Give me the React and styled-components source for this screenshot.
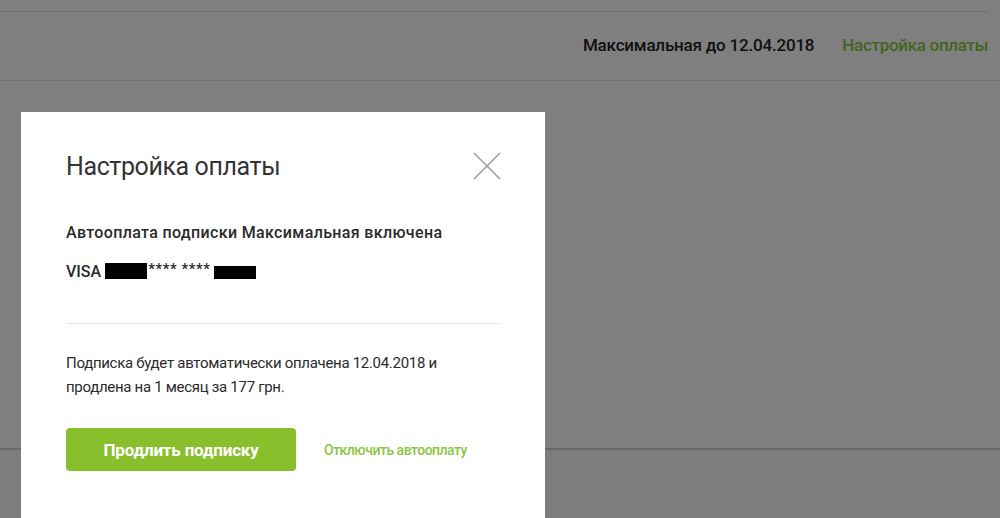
import React from "react";
import styled, { createGlobalStyle } from "styled-components";

const GlobalStyle = createGlobalStyle`
  html, body {
    margin: 0;
    padding: 0;
    background: #ffffff;
    font-family: Roboto, "Noto Sans", sans-serif;
    color: #222;
  }
  * { box-sizing: border-box; }
`;

const Page = styled.div`
  width: 1000px;
  height: 518px;
  overflow: hidden;
  display: flex;
  flex-direction: column;
`;

const TopBar = styled.div`
  height: 12px;
  width: 988px;
  border-bottom: 1px solid #dedede;
`;

const SubBar = styled.div`
  height: 69px;
  display: flex;
  align-items: center;
  justify-content: flex-end;
  gap: 28px;
  padding: 0 12px 2px 0;
  border-bottom: 1px solid #e4e4e4;
`;

const PlanText = styled.span`
  font-size: 17px;
  font-weight: 500;
  color: #1e1e1e;
  letter-spacing: -0.2px;
`;

const HeaderLink = styled.a`
  font-size: 17px;
  font-weight: 500;
  color: #8cc63f;
  letter-spacing: -0.3px;
  text-decoration: none;
`;

const Content = styled.div`
  height: 369px;
  border-bottom: 2px solid #cccccc;
`;

const Footer = styled.div`
  flex: 1;
  background: #fbfbfb;
`;

const Overlay = styled.div`
  position: fixed;
  inset: 0;
  background: rgba(0, 0, 0, 0.5);
  padding: 112px 0 0 21px;
`;

const Modal = styled.div`
  width: 524px;
  height: 460px;
  background: #ffffff;
  padding: 34px 45px 0 45px;
  display: flex;
  flex-direction: column;
`;

const ModalHead = styled.div`
  display: flex;
  align-items: center;
  justify-content: space-between;
  height: 40px;
`;

const Title = styled.h2`
  margin: 0;
  font-size: 25px;
  font-weight: 400;
  color: #333333;
  letter-spacing: -0.4px;
`;

const CloseButton = styled.button`
  border: 0;
  background: none;
  padding: 0;
  width: 30px;
  height: 30px;
  display: flex;
  align-items: center;
  justify-content: center;
  margin-right: -2px;
  cursor: pointer;
`;

const Subhead = styled.div`
  margin-top: 37px;
  font-size: 16px;
  font-weight: 500;
  color: #2a2a2a;
  letter-spacing: 0.35px;
`;

const CardRow = styled.div`
  margin-top: 19px;
  display: flex;
  align-items: center;
  font-size: 16px;
  font-weight: 500;
  color: #2a2a2a;
  height: 20px;
`;

const Masked = styled.span`
  display: inline-block;
  background: #000;
  width: ${(p) => p.$w}px;
  height: ${(p) => p.$h}px;
  margin: ${(p) => p.$m};
`;

const Stars = styled.span`
  font-size: 15px;
  letter-spacing: 0.6px;
  align-self: flex-start;
  margin-top: -1px;
`;

const Divider = styled.hr`
  margin: 42px 0 0;
  border: 0;
  border-top: 1px solid #e6e6e6;
`;

const Note = styled.p`
  margin: 27px 0 0;
  font-size: 15px;
  line-height: 24px;
  color: #2a2a2a;
  letter-spacing: -0.3px;
`;

const Actions = styled.div`
  margin-top: 29px;
  display: flex;
  align-items: center;
  gap: 28px;
`;

const PrimaryButton = styled.button`
  width: 230px;
  height: 43px;
  border: 0;
  border-radius: 4px;
  background: #89bf2c;
  color: #ffffff;
  font-family: inherit;
  font-size: 17px;
  font-weight: 700;
  letter-spacing: -0.2px;
  cursor: pointer;
`;

const TextLink = styled.a`
  font-size: 14px;
  font-weight: 500;
  color: #8cc63f;
  letter-spacing: -0.5px;
  text-decoration: none;
  cursor: pointer;
`;

const CloseIcon = () => (
  <svg width="28" height="28" viewBox="0 0 28 28">
    <path d="M1 1 L27 27 M27 1 L1 27" stroke="#9a9a9a" strokeWidth="1.5" fill="none" />
  </svg>
);

export default function App() {
  return (
    <>
      <GlobalStyle />
      <Page>
        <TopBar />
        <SubBar>
          <PlanText>Максимальная до 12.04.2018</PlanText>
          <HeaderLink>Настройка оплаты</HeaderLink>
        </SubBar>
        <Content />
        <Footer />
      </Page>
      <Overlay>
        <Modal>
          <ModalHead>
            <Title>Настройка оплаты</Title>
            <CloseButton aria-label="Закрыть">
              <CloseIcon />
            </CloseButton>
          </ModalHead>
          <Subhead>Автооплата подписки Максимальная включена</Subhead>
          <CardRow>
            VISA
            <Masked $w={42} $h={16} $m="0 1px 0 4px" />
            <Stars>**** ****</Stars>
            <Masked $w={42} $h={13} $m="3px 0 0 3px" />
          </CardRow>
          <Divider />
          <Note>
            Подписка будет автоматически оплачена 12.04.2018 и
            <br />
            продлена на 1 месяц за 177 грн.
          </Note>
          <Actions>
            <PrimaryButton>Продлить подписку</PrimaryButton>
            <TextLink>Отключить автооплату</TextLink>
          </Actions>
        </Modal>
      </Overlay>
    </>
  );
}
